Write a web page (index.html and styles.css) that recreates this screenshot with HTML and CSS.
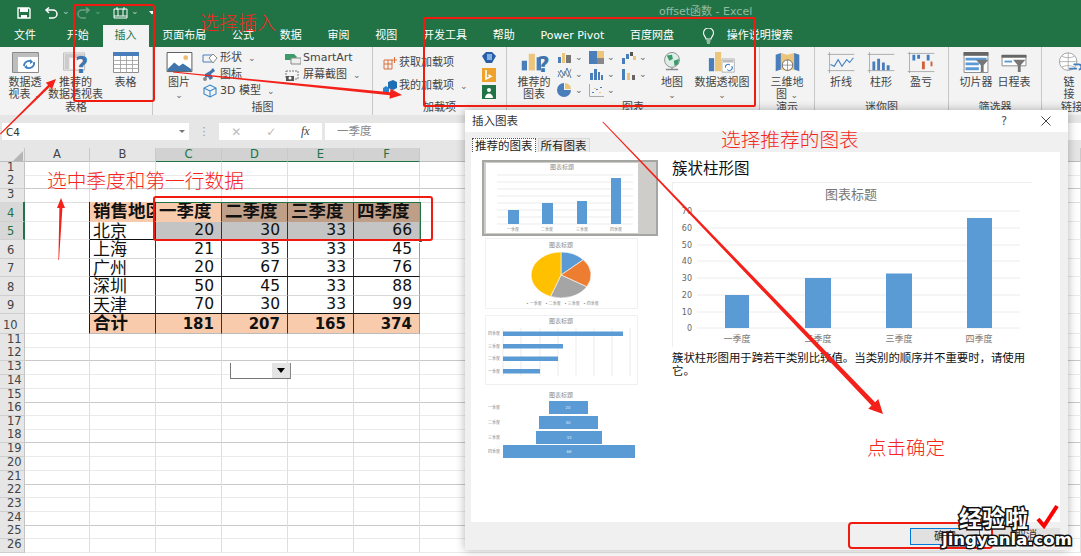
FILE: index.html
```html
<!DOCTYPE html>
<html lang="zh">
<head>
<meta charset="utf-8">
<title>offset函数 - Excel</title>
<link rel="stylesheet" href="styles.css">
</head>
<body>
<header class="titlebar">
  <div class="qa">
    <svg class="qa-save" width="14" height="12" viewBox="0 0 14 12"><path d="M1 1h11l1 1v9H1z" fill="none" stroke="#fff" stroke-width="1.4"/><path d="M3 1h8v4H3zM4 8h6v3H4z" fill="#fff"/></svg>
    <svg class="qa-undo" width="15" height="12" viewBox="0 0 15 12"><path d="M2 3h7a4 4 0 0 1 0 8H5M5 .5 2 3l3 3" fill="none" stroke="#fff" stroke-width="1.5"/></svg>
    <span class="qa-caret">⌄</span>
    <svg class="qa-redo" width="15" height="12" viewBox="0 0 15 12"><path d="M13 3H6a4 4 0 0 0 0 8h4M10 .5 13 3l-3 3" fill="none" stroke="#6f9f85" stroke-width="1.5"/></svg>
    <span class="qa-caret qa-c2">⌄</span>
    <svg class="qa-print" width="15" height="12" viewBox="0 0 15 12"><path d="M1 2h13v9H1zM1 9h13M5 2v7M10 2v7M4 0v3M11 0v3" fill="none" stroke="#fff" stroke-width="1"/></svg>
    <span class="qa-caret qa-c3">⌄</span>
    <svg class="qa-more" width="6" height="4" viewBox="0 0 6 4"><path d="M0 0h6L3 3.5z" fill="#fff"/></svg>
  </div>
  <div class="doc-title">offset函数 - Excel</div>
</header>
<nav class="tabs">
  <span class="tab tab-file">文件</span><span class="tab">开始</span><span class="tab tab-on">插入</span><span class="tab">页面布局</span><span class="tab">公式</span><span class="tab">数据</span><span class="tab">审阅</span><span class="tab">视图</span><span class="tab">开发工具</span><span class="tab">帮助</span><span class="tab">Power Pivot</span><span class="tab">百度网盘</span>
  <span class="tab tab-tell"><svg width="13" height="16" viewBox="0 0 13 16"><path d="M4 11c0-2-2.500-3-2.500-6a5 5 0 0 1 10 0c0 3-2.500 4-2.500 6zM4.500 13h4M5 15h3" fill="none" stroke="#fff" stroke-width="1.100"/></svg><span>操作说明搜索</span></span>
</nav>
<section class="ribbon">
  <div class="group g-table">
    <div class="gbody">
      <div class="rb w50"><svg width="27" height="21" viewBox="0 0 27 21"><path d="M.5.500h26v20H.5z" fill="#fff" stroke="#8a8a8a"/><path d="M1 1h25v4H1zM1 5h5v15H1z" fill="#bdbdbd"/><path d="M12 14a5 5 0 0 1 8-4M22 10a5 5 0 0 1-8 5" fill="none" stroke="#3f7fc1" stroke-width="1.800"/><path d="M18 7l3 3-3 2zM15 17l-3-2 3-2z" fill="#3f7fc1"/></svg><span class="rl">数据透<br>视表 <i class="car">⌄</i></span></div>
      <div class="rb w51"><svg width="27" height="22" viewBox="0 0 27 22"><path d="M1 1h22v18H1z" fill="#f6f6f6" stroke="#bbb"/><path d="M2 2h20v4H2zM2 6h5v12H2z" fill="#ccc"/><text x="13" y="22" class="ic-q">?</text></svg><span class="rl">推荐的<br>数据透视表</span></div>
      <div class="rb w49"><svg width="26" height="21" viewBox="0 0 26 21"><path d="M.5.500h25v20H.5z" fill="#fff" stroke="#8f8f8f"/><path d="M0 0h26v4H0z" fill="#4a7ebb"/><path d="M0 8.500h26M0 12.500h26M0 16.500h26M7.500 4v17M13.500 4v17M19.500 4v17" stroke="#9a9a9a" stroke-width=".8"/></svg><span class="rl">表格</span></div>
    </div>
    <div class="glabel">表格</div>
  </div>
  <div class="group g-illus">
    <div class="gbody pl3">
      <div class="rb w46"><svg width="27" height="22" viewBox="0 0 27 22"><path d="M.5.500h26v20H.5z" fill="#fff" stroke="#555"/><path d="M1 18l7-7 5 4 4-3 9 6v2H1z" fill="#3f74ad"/><circle cx="20" cy="6" r="2.500" fill="#eebc6d"/></svg><span class="rl">图片<br><i class="car">⌄</i></span></div>
      <div class="smcol w83">
        <div class="smrow"><svg width="16" height="13" viewBox="0 0 16 13"><path d="M1 3h9v7H1z" fill="none" stroke="#4a7ebb"/><path d="M11 2l4 4-4 5-4-5z" fill="#fff" stroke="#8a8a8a"/></svg>形状 <i class="car">⌄</i></div>
        <div class="smrow"><svg width="16" height="13" viewBox="0 0 16 13"><path d="M3 6l5-3 3-3 2 3-4 3 2 4-3 2-2-3-3 1z" fill="#3f74ad"/><circle cx="3" cy="11" r="2" fill="#888"/></svg>图标</div>
        <div class="smrow"><svg width="16" height="14" viewBox="0 0 16 14"><path d="M8 1l6 3v6l-6 3-6-3V4zM2 4l6 3 6-3M8 7v6" fill="none" stroke="#3a87c8" stroke-width="1.100"/></svg>3D 模型 <i class="car">⌄</i></div>
      </div>
      <div class="smcol">
        <div class="smrow"><svg width="16" height="13" viewBox="0 0 16 13"><path d="M0 2h9l3 3-3 3H0z" fill="#3d9a6b"/><path d="M6 6h10v6H6z" fill="#eee" stroke="#888"/></svg>SmartArt</div>
        <div class="smrow"><svg width="16" height="13" viewBox="0 0 16 13"><path d="M1 3h12v8H1z" fill="none" stroke="#777" stroke-dasharray="2 1"/><path d="M1 8h8v5H1z" fill="#555"/><circle cx="5" cy="10" r="1.500" fill="#fff"/></svg>屏幕截图 <i class="car">⌄</i></div>
      </div>
    </div>
    <div class="glabel">插图</div>
  </div>
  <div class="group g-addin">
    <div class="gbody pl10">
      <div class="smcol w99 addcol">
        <div class="smrow"><svg width="14" height="13" viewBox="0 0 14 13"><path d="M1 3h8v9H1zM5 3v9M1 7h8M11.500 0v6M8.500 3h6" fill="none" stroke="#d86f3a"/></svg>获取加载项</div>
        <div class="smrow"><svg width="14" height="13" viewBox="0 0 14 13"><path d="M5 2l5-2 4 2v6l-4 2-5-2z" fill="#1f6db3"/><path d="M0 8l3-2 3 2v4H0z" fill="#2a85d0"/></svg>我的加载项 <i class="car cargap">⌄</i></div>
      </div>
      <div class="addicons">
        <svg width="14" height="13" viewBox="0 0 14 13"><path d="M4 1h6l4 4-4 7H4L0 5z" fill="#2a5fa8"/><path d="M5 3h5v6H5z" fill="#7fb0e6"/></svg>
        <svg width="14" height="14" viewBox="0 0 14 14"><path d="M0 0h14v14H0z" fill="#f0a32c"/><path d="M4 2v9l5-2.500L6.500 7" fill="none" stroke="#fff" stroke-width="1.600"/></svg>
        <svg width="14" height="14" viewBox="0 0 14 14"><path d="M0 0h14v14H0z" fill="#217346"/><circle cx="7" cy="5" r="2" fill="#fff"/><path d="M3 13c0-6 8-6 8 0z" fill="#fff"/></svg>
      </div>
    </div>
    <div class="glabel">加载项</div>
  </div>
  <div class="group g-chart">
    <div class="gbody pl9">
      <div class="rb w36"><svg width="30" height="24" viewBox="0 0 30 24"><path d="M1 10h6v11H1z" fill="#4a7ebb"/><path d="M9 2h7v19H9z" fill="#ecc57a"/><path d="M18 6h5v15h-5z" fill="#4a7ebb"/><text x="19" y="23" class="ic-q">?</text></svg><span class="rl">推荐的<br>图表</span></div>
      <div class="chgrid">
        <span class="chi"><svg width="15" height="13" viewBox="0 0 15 13"><path d="M1 6h3v6H1z" fill="#4a7ebb"/><path d="M5 2h3v10H5z" fill="#ecc57a"/><path d="M9 4h5v8H9z" fill="#777"/></svg><i class="car">⌄</i></span>
        <span class="chi"><svg width="15" height="13" viewBox="0 0 15 13"><path d="M0 0h8v13H0z" fill="#4a7ebb"/><path d="M8 0h7v7H8z" fill="#ecc57a"/><path d="M8 7h7v6H8z" fill="#888"/></svg><i class="car">⌄</i></span>
        <span class="chi"><svg width="15" height="13" viewBox="0 0 15 13"><path d="M1 7h3v6H1zM5 3h3v5H5z" fill="#4a7ebb"/><path d="M9 1h3v4H9z" fill="#555"/><path d="M12 5h3v4h-3z" fill="#ecc57a"/></svg><i class="car">⌄</i></span>
        <span class="chi"><svg width="15" height="13" viewBox="0 0 15 13"><path d="M1 10l3-7 3 6 3-8 4 10" fill="none" stroke="#4a7ebb"/><path d="M1 4l4 7 3-7 3 6 3-8" fill="none" stroke="#888"/></svg><i class="car">⌄</i></span>
        <span class="chi"><svg width="15" height="13" viewBox="0 0 15 13"><path d="M1 6h3v7H1zM5 2h3v11H5zM9 5h2v8H9zM12 8h2v5h-2z" fill="#4a7ebb"/></svg><i class="car">⌄</i></span>
        <span class="chi"><svg width="15" height="13" viewBox="0 0 15 13"><path d="M1 2h3v11H1z" fill="#4a7ebb"/><path d="M6 6h3v7H6z" fill="#ecc57a"/><path d="M11 8h3v5h-3z" fill="#666"/></svg><i class="car">⌄</i></span>
        <span class="chi"><svg width="15" height="14" viewBox="0 0 15 14"><path d="M7 0a7 7 0 1 0 7 7H7z" fill="#4a7ebb"/><path d="M8 0a6 6 0 0 1 6 6H8z" fill="#ecc57a"/></svg><i class="car">⌄</i></span>
        <span class="chi"><svg width="15" height="13" viewBox="0 0 15 13"><path d="M.5 0v12.500H15" fill="none" stroke="#aaa"/><path d="M3 8h2v1H3zM7 5h2v1H7zM11 3h2v1h-2z" fill="#4a7ebb"/><path d="M5 4h2v1H5zM10 8h2v1h-2z" fill="#ecc57a"/></svg><i class="car">⌄</i></span>
      </div>
      <div class="rb w48"><svg width="24" height="24" viewBox="0 0 24 24"><circle cx="12" cy="9" r="8.500" fill="#dceee6" stroke="#888"/><path d="M6 4l6-1 1 5-4 2zM14 10l6-2-1 6-4 2z" fill="#3d9a6b"/><path d="M5 20h14M12 18v2" stroke="#888" stroke-width="1.500"/></svg><span class="rl">地图<br><i class="car">⌄</i></span></div>
      <div class="rb w52"><svg width="30" height="24" viewBox="0 0 30 24"><path d="M0 7h6v15H0z" fill="#4a7ebb"/><path d="M7 0h7v22H7z" fill="#ecc57a"/><path d="M15 8h14v15H15z" fill="#fff" stroke="#aaa"/><path d="M16 9h12v3H16z" fill="#bbb"/><path d="M19 18a3 3 0 0 1 5-3M26 16a3 3 0 0 1-5 4" fill="none" stroke="#3f7fc1" stroke-width="1.200"/></svg><span class="rl">数据透视图<br><i class="car">⌄</i></span></div>
    </div>
    <div class="glabel">图表</div>
  </div>
  <div class="group g-demo">
    <div class="gbody center">
      <div class="rb w52"><svg width="27" height="24" viewBox="0 0 27 24"><path d="M0 3l6-2v19l-6 2zM21 1l6 2v19l-6-2z" fill="#4a7ebb"/><path d="M6 1l7 2 8-2v19l-8 2-7-2z" fill="#ecc57a"/><circle cx="13.500" cy="15" r="6" fill="#fff" stroke="#666"/><path d="M7.500 15h12M13.500 9v12" stroke="#666" stroke-width=".7"/></svg><span class="rl">三维地<br>图 <i class="car">⌄</i></span></div>
    </div>
    <div class="glabel">演示</div>
  </div>
  <div class="group g-spark">
    <div class="gbody pl6">
      <div class="rb w40"><svg width="28" height="22" viewBox="0 0 28 22"><path d="M0 2.500h28M0 19.500h28M2 0v22" stroke="#9a9a9a" stroke-width=".8"/><path d="M3 13l4 2 4-7 4 7 5-7 3 3 4-5" fill="none" stroke="#3f7fc1" stroke-width="1.100"/></svg><span class="rl">折线</span></div>
      <div class="rb w40"><svg width="28" height="22" viewBox="0 0 28 22"><path d="M0 2.500h28M0 19.500h28M2 0v22" stroke="#9a9a9a" stroke-width=".8"/><path d="M5 10h3v9H5zM10 7h3v12h-3zM15 11h3v8h-3zM20 14h3v5h-3z" fill="#4a7ebb"/></svg><span class="rl">柱形</span></div>
      <div class="rb w40"><svg width="28" height="22" viewBox="0 0 28 22"><path d="M0 1.500h28M0 20.500h28M2 0v22" stroke="#9a9a9a" stroke-width=".8"/><path d="M5 3h3v6H5zM10 3h3v4h-3zM20 3h3v6h-3z" fill="#3f7fc1"/><path d="M15 10h3v8h-3zM24 10h2v5h-2z" fill="#d0603a"/></svg><span class="rl">盈亏</span></div>
    </div>
    <div class="glabel">迷你图</div>
  </div>
  <div class="group g-filter">
    <div class="gbody pl8">
      <div class="rb w38"><svg width="26" height="22" viewBox="0 0 26 22"><path d="M.5.500h25v21H.5z" fill="#fff" stroke="#888"/><path d="M0 0h26v4H0z" fill="#666"/><path d="M2 6h22v3H2zM2 11h14v3H2zM2 16h14v3H2z" fill="#5b9bd5"/><path d="M13 8h13l-5 6v7h-3v-7z" fill="#777"/></svg><span class="rl">切片器</span></div>
      <div class="rb w38"><svg width="26" height="22" viewBox="0 0 26 22"><path d="M.5 3.500h25v11H.5z" fill="#fff" stroke="#888"/><path d="M0 3h26v3H0z" fill="#666"/><path d="M3 9h8v2H3z" fill="#5b9bd5"/><path d="M12 8h13l-5 6v7h-3v-7z" fill="#777"/></svg><span class="rl">日程表</span></div>
    </div>
    <div class="glabel">筛选器</div>
  </div>
  <div class="group g-link">
    <div class="gbody pl8">
      <div class="rb w38"><svg width="27" height="24" viewBox="0 0 27 24"><circle cx="12" cy="11" r="10" fill="#fff" stroke="#999"/><path d="M2 11h20M12 1v20M5 5c4 2 10 2 14 0M5 17c4-2 10-2 14 0" fill="none" stroke="#999" stroke-width=".8"/><path d="M13 19h9M18 14h6a3 3 0 0 1 0 6" fill="none" stroke="#3f7fc1" stroke-width="2"/></svg><span class="rl">链<br>接</span></div>
    </div>
    <div class="glabel">链接</div>
  </div>
</section>
<section class="fbar">
  <div class="namebox"><span>C4</span><i class="nb-car"></i></div>
  <div class="fdots">⋮</div>
  <div class="fbtns"><span class="fb">✕</span><span class="fb">✓</span><span class="fb fx">fx</span></div>
  <div class="finput">一季度</div>
</section>
<main class="sheet">
  <div class="row colhead"><span class="corner"></span><span class="ch">A</span><span class="ch">B</span><span class="ch on">C</span><span class="ch on">D</span><span class="ch on">E</span><span class="ch on">F</span><span class="ch">G</span></div>
  <div class="row h13"><span class="rh">1</span><i></i><i></i><i></i><i></i><i></i><i></i><i></i></div>
  <div class="row h14 d"><span class="rh">2</span><i></i><i></i><i></i><i></i><i></i><i></i><i></i></div>
  <div class="row h13 lastb"><span class="rh">3</span><i></i><i></i><i></i><i></i><i></i><i></i><i></i></div>
  <div class="row h20"><span class="rh on">4</span><i class="bl"></i><b class="c peach">销售地区</b><b class="c peach">一季度</b><b class="c tan">二季度</b><b class="c tan">三季度</b><b class="c tan fr">四季度</b><i></i></div>
  <div class="row h18"><span class="rh on">5</span><i class="bl"></i><span class="c lb">北京</span><span class="c n sel lb">20</span><span class="c n sel lb">30</span><span class="c n sel lb">33</span><span class="c n sel lb fr">66</span><i></i></div>
  <div class="row h19"><span class="rh">6</span><i class="bl"></i><span class="c">上海</span><span class="c n">21</span><span class="c n">35</span><span class="c n">33</span><span class="c n fr">45</span><i></i></div>
  <div class="row h18"><span class="rh">7</span><i class="bl"></i><span class="c lb">广州</span><span class="c n lb">20</span><span class="c n lb">67</span><span class="c n lb">33</span><span class="c n lb fr">76</span><i></i></div>
  <div class="row h19"><span class="rh">8</span><i class="bl"></i><span class="c">深圳</span><span class="c n">50</span><span class="c n">45</span><span class="c n">33</span><span class="c n fr">88</span><i></i></div>
  <div class="row h18"><span class="rh">9</span><i class="bl"></i><span class="c lb">天津</span><span class="c n lb">70</span><span class="c n lb">30</span><span class="c n lb">33</span><span class="c n lb fr">99</span><i></i></div>
  <div class="row h20"><span class="rh r10">10</span><i class="bl"></i><b class="c peach tot">合计</b><b class="c n peach tot">181</b><b class="c n peach tot">207</b><b class="c n peach tot">165</b><b class="c n peach tot fr">374</b><i></i></div>
  <div class="row h13"><span class="rh">11</span><i></i><i></i><i></i><i></i><i></i><i></i><i></i></div>
  <div class="row h14 d"><span class="rh">12</span><i></i><i></i><i></i><i></i><i></i><i></i><i></i></div>
  <div class="row h14"><span class="rh">13</span><i></i><i></i><i></i><i></i><i></i><i></i><i></i></div>
  <div class="row h14"><span class="rh">14</span><i></i><i></i><i></i><i></i><i></i><i></i><i></i></div>
  <div class="row h13 d"><span class="rh">15</span><i></i><i></i><i></i><i></i><i></i><i></i><i></i></div>
  <div class="row h14"><span class="rh">16</span><i></i><i></i><i></i><i></i><i></i><i></i><i></i></div>
  <div class="row h13"><span class="rh">17</span><i></i><i></i><i></i><i></i><i></i><i></i><i></i></div>
  <div class="row h14 d"><span class="rh">18</span><i></i><i></i><i></i><i></i><i></i><i></i><i></i></div>
  <div class="row h14"><span class="rh">19</span><i></i><i></i><i></i><i></i><i></i><i></i><i></i></div>
  <div class="row h14"><span class="rh">20</span><i></i><i></i><i></i><i></i><i></i><i></i><i></i></div>
  <div class="row h13 d"><span class="rh">21</span><i></i><i></i><i></i><i></i><i></i><i></i><i></i></div>
  <div class="row h14"><span class="rh">22</span><i></i><i></i><i></i><i></i><i></i><i></i><i></i></div>
  <div class="row h14"><span class="rh">23</span><i></i><i></i><i></i><i></i><i></i><i></i><i></i></div>
  <div class="row h13 d"><span class="rh">24</span><i></i><i></i><i></i><i></i><i></i><i></i><i></i></div>
  <div class="row h14"><span class="rh">25</span><i></i><i></i><i></i><i></i><i></i><i></i><i></i></div>
  <div class="row h13"><span class="rh">26</span><i></i><i></i><i></i><i></i><i></i><i></i><i></i></div>
  <div class="selbox"><i class="handle"></i></div>
  <div class="combo"><i class="combo-btn"></i></div>
</main>

<aside class="dialog">
  <div class="dtitle"><span>插入图表</span><span class="dq">?</span><svg class="dx" width="10" height="10" viewBox="0 0 10 10"><path d="M.5.500l9 9M9.500.500l-9 9" stroke="#444"/></svg></div>
  <div class="dtabs"><span class="dtab dtab-on">推荐的图表</span><span class="dtab">所有图表</span></div>
  <div class="dpanel">
    <div class="thumbs">
      <div class="thumb sel-thumb">
        <svg width="152" height="70" viewBox="0 0 152 70">
          <rect width="152" height="70" fill="#fff"/>
          <text x="76" y="6" class="t-title">图表标题</text>
          <path d="M11 12h136M11 19h136M11 26h136M11 33h136M11 40h136M11 47h136M11 54h136M11 61h136" stroke="#e6e6e6" stroke-width=".8"/>
          <path d="M22 47h11v14H22zM56 40h11v21H56zM91 38h10v23H91zM125 15h10v46h-10z" fill="#5b9bd5"/>
          <text x="27" y="68" class="t-tiny">一季度</text><text x="61" y="68" class="t-tiny">二季度</text><text x="96" y="68" class="t-tiny">三季度</text><text x="130" y="68" class="t-tiny">四季度</text>
        </svg>
      </div>
      <div class="thumb t2">
        <svg width="153" height="71" viewBox="0 0 153 71">
          <rect x=".5" y=".5" width="152" height="70" fill="#fff" stroke="#f0f0f0"/>
          <text x="76" y="9" class="t-title">图表标题</text>
          <g stroke="#fff" stroke-width=".6">
            <path d="M76 37V14A30 23 0 0 1 98.400 21.700Z" fill="#5b9bd5"/>
            <path d="M76 37 98.400 21.700A30 23 0 0 1 101.800 48.800Z" fill="#ed7d31"/>
            <path d="M76 37 101.800 48.800A30 23 0 0 1 65.500 58.500Z" fill="#a5a5a5"/>
            <path d="M76 37 65.500 58.500A30 23 0 0 1 76 14Z" fill="#ffc000"/>
          </g>
          <text x="49" y="67" class="t-tiny">• 一季度</text><text x="68" y="67" class="t-tiny">• 二季度</text><text x="87" y="67" class="t-tiny">• 三季度</text><text x="106" y="67" class="t-tiny">• 四季度</text>
        </svg>
      </div>
      <div class="thumb t3">
        <svg width="153" height="70" viewBox="0 0 153 70">
          <rect x=".5" y=".5" width="152" height="69" fill="#fff" stroke="#f0f0f0"/>
          <text x="76" y="8" class="t-title">图表标题</text>
          <path d="M18 13v48M36 13v48M55 13v48M73 13v48M91 13v48M109 13v48M127 13v48M145 13v48" stroke="#e6e6e6" stroke-width=".8"/>
          <path d="M18 16.500h120v4.500H18zM18 29h60v4.500H18zM18 41.500h55v4.500H18zM18 54h37v4.500H18z" fill="#5b9bd5"/>
          <text x="9" y="20" class="t-tiny">四季度</text><text x="9" y="33" class="t-tiny">三季度</text><text x="9" y="45" class="t-tiny">二季度</text><text x="9" y="58" class="t-tiny">一季度</text>
        </svg>
      </div>
      <div class="thumb t4">
        <svg width="153" height="68" viewBox="0 0 153 68">
          <text x="76" y="5" class="t-title">图表标题</text>
          <path d="M64 9h39v13H64zM54 24h59v13H54zM51 39h66v13H51zM18 53h132v13H18z" fill="#5b9bd5"/>
          <text x="9" y="17" class="t-tiny">一季度</text><text x="9" y="32" class="t-tiny">二季度</text><text x="9" y="47" class="t-tiny">三季度</text><text x="9" y="61" class="t-tiny">四季度</text>
          <text x="83" y="17" class="t-tiny t-w">20</text><text x="83" y="32" class="t-tiny t-w">30</text><text x="84" y="47" class="t-tiny t-w">33</text><text x="84" y="61" class="t-tiny t-w">66</text>
        </svg>
      </div>
    </div>
    <div class="detail">
      <h2 class="dhead">簇状柱形图</h2>
      <svg class="bigchart" width="360" height="165" viewBox="0 0 360 165">
        <path d="M.5 165V.5H360" fill="none" stroke="#eee"/>
        <text x="179" y="17" class="c-title">图表标题</text>
        <path d="M25 29h323M25 46h323M25 63h323M25 79h323M25 96h323M25 113h323M25 130h323M25 146h323" stroke="#ececec"/>
        <path d="M53 113h24v33H53zM133 96h26v50h-26zM214 91.500h26V146h-26zM295 36h25v110h-25z" fill="#5b9bd5"/>
        <g class="c-y"><text x="20" y="32">70</text><text x="20" y="49">60</text><text x="20" y="66">50</text><text x="20" y="82">40</text><text x="20" y="99">30</text><text x="20" y="116">20</text><text x="20" y="133">10</text><text x="20" y="149">0</text></g>
        <g class="c-x"><text x="65" y="160">一季度</text><text x="146" y="160">二季度</text><text x="227" y="160">三季度</text><text x="307" y="160">四季度</text></g>
      </svg>
      <p class="ddesc">簇状柱形图用于跨若干类别比较值。当类别的顺序并不重要时，请使用它。</p>
    </div>
  </div>
  <div class="dfoot"><span class="dbtn dbtn-on">确定</span><span class="dbtn">取消</span></div>
</aside>

<div class="note n1">选择插入</div>
<div class="note n2">选中季度和第一行数据</div>
<div class="note n3">选择推荐的图表</div>
<div class="note n4">点击确定</div>

<svg class="marks" width="1081" height="556" viewBox="0 0 1081 556">
  <g fill="none" stroke="#ef1a10" stroke-width="2">
    <rect x="74" y="5" width="80" height="96" rx="2"/>
    <rect x="424" y="18" width="331" height="88" rx="1"/>
    <rect x="154" y="197" width="278" height="43" rx="2"/>
    <rect x="849" y="523" width="143" height="25" rx="3"/>
  </g>
  <g fill="#f4201a">
    <polygon points="0,133.400 48.100,85.100 45.700,82.800 56,79 52,89.200 49.700,86.900 .6,134.400"/>
    <polygon points="173,71.600 390.150,92.300 390.500,88.800 402,95 389.500,98.800 389.850,95.300 173,72.600"/>
    <polygon points="58.400,260 59.400,208 57,208 61,198 65,208 62.400,208 59,260"/>
    <polygon points="603,121.500 875.100,402.200 878.350,399.100 883,414 868.250,408.700 871.500,405.600 602.500,122.300"/>
  </g>
  <path d="M1038 519l6 7 13-20" fill="none" stroke="#f00" stroke-width="4"/>
</svg>
<div class="wm wm-cn">经验啦</div>
<div class="wm wm-en">jingyanla.com</div>
</body>
</html>
```
FILE: styles.css
```css
* { box-sizing: border-box; }
html, body { margin: 0; padding: 0; }
body {
  position: relative;
  width: 1081px;
  height: 556px;
  overflow: hidden;
  background: #fff;
  font: 11px/12px "DejaVu Sans", "Noto Sans CJK SC", sans-serif;
  color: #333;
}
i { font-style: normal; }

/* title bar */
.titlebar { height: 25px; background: #217346; display: flex; align-items: center; position: relative; }
.qa { display: flex; align-items: center; padding-left: 17px; }
.qa-undo { margin-left: 13px; }
.qa-caret { color: #b5d0c1; font-size: 9px; line-height: 8px; margin-left: 3px; width: 10px; margin-top: -3px; }
.qa-c2 { color: #6f9f85; }
.qa-redo { margin-left: 4px; }
.qa-print { margin-left: 9px; }
.qa-more { margin-left: 8px; }
.doc-title { position: absolute; left: 659px; top: 6px; color: #93bba5; font-size: 11px; white-space: nowrap; }

.tabs { height: 22px; background: #217346; display: flex; align-items: center; gap: 1.75px; padding-left: 2px; color: #fff; }
.tab { height: 22px; padding: 0 12px; line-height: 22px; white-space: nowrap; }
.tab-file { margin-right: 5px; }
.tab-on { background: #f3f3f3; color: #217346; }
.tab-tell { display: flex; align-items: center; gap: 12px; margin-left: 2px; }

/* ribbon */
.ribbon { height: 68px; background: #f3f3f3; display: flex; font-size: 11px; }
.group { display: flex; flex-direction: column; border-right: 1px solid #c8c8c8; flex: none; position: relative; }
.g-table { width: 153px; }
.g-illus { width: 220px; }
.g-addin { width: 134px; }
.g-chart { width: 253px; }
.g-demo { width: 55px; }
.g-spark { width: 134px; }
.g-filter { width: 93px; }
.g-link { flex: 1; border-right: 0; }
.g-link .glabel { padding-left: 14px; }
.gbody { flex: 1; display: flex; min-height: 0; }
.center { justify-content: center; }
.pl3 { padding-left: 3px; }
.pl6 { padding-left: 6px; }
.pl8 { padding-left: 8px; }
.pl9 { padding-left: 9px; }
.pl10 { padding-left: 10px; }
.glabel { height: 13px; line-height: 13px; text-align: center; color: #444; flex: none; margin-bottom: 1px; }
.rb { display: flex; flex-direction: column; align-items: center; padding-top: 5px; flex: none; }
.rb svg { height: 21px; flex: none; }
.rl { margin-top: 4px; text-align: center; white-space: nowrap; color: #444; }
.w36 { width: 36px; } .w38 { width: 38px; } .w40 { width: 40px; } .w46 { width: 46px; }
.w48 { width: 48px; } .w49 { width: 49px; } .w50 { width: 50px; } .w51 { width: 51px; } .w52 { width: 52px; }
.w83 { width: 83px; } .w99 { width: 99px; }
.car { color: #666; font-size: 9px; line-height: 8px; }
.cargap { margin-left: 6px; }
.smcol { display: flex; flex-direction: column; flex: none; padding-top: 3px; }
.smrow { height: 16.5px; display: flex; align-items: center; gap: 2px; white-space: nowrap; color: #444; }
.smrow svg { flex: none; }
.smrow .car { margin-left: 4px; }
.addcol { padding-top: 8px; gap: 6.5px; }
.addicons { display: flex; flex-direction: column; gap: 3.5px; padding-top: 4px; }
.chgrid { width: 96px; display: grid; grid-template-columns: repeat(3, 32px); grid-auto-rows: 16.5px; padding: 2px 0 0 5px; flex: none; }
.chi { display: flex; align-items: center; gap: 3px; }

/* formula bar */
.fbar { height: 33px; background: #e6e6e6; display: flex; align-items: flex-start; padding: 8px 0 0 2px; }
.namebox { width: 187px; height: 17px; background: #fff; display: flex; align-items: center; justify-content: space-between; padding: 0 4px; font-size: 10.5px; }
.nb-car { border: 3px solid transparent; border-top-color: #777; border-bottom: 0; }
.fdots { width: 30px; text-align: center; color: #999; line-height: 17px; }
.fbtns { width: 103px; height: 17px; background: #fff; display: flex; align-items: center; justify-content: space-around; color: #bbb; font-size: 12px; }
.fx { color: #444; font: italic 12px "Liberation Serif", serif; }
.finput { margin-left: 3px; flex: 1; height: 17px; background: #fff; padding-left: 12px; line-height: 17px; color: #888; font-size: 11.5px; }

/* sheet */
.sheet { position: relative; height: 408px; overflow: hidden; }
.row { display: grid; grid-template-columns: 25px 65px 66px 66px 66px 66px 66px 1fr; }
.row > i { border-right: 1px solid #dedede; border-bottom: 1px solid #eaeaea; display: block; }
.row.d > i { border-bottom-color: #c9c9c9; }
.row.lastb > i { border-bottom-color: #dedede; }
.row .bl { border-right-color: #222; }
.colhead { height: 14px; background: #e6e6e6; border-bottom: 1px solid #bdbdbd; }
.corner { border-right: 1px solid #c4c4c4; position: relative; }
.corner::after { content: ""; position: absolute; right: 1px; bottom: 1px; border: 5px solid transparent; border-right-color: #b5b5b5; border-bottom-color: #b5b5b5; }
.ch { text-align: center; font-size: 11.5px; line-height: 13px; color: #444; border-right: 1px solid #c9c9c9; }
.ch.on { background: #d2d2d2; color: #217346; border-bottom: 1px solid #217346; height: 14px; }
.rh { background: #e6e6e6; border-right: 1px solid #c4c4c4; border-bottom: 1px solid #cfcfcf; font: 11.5px/1 "DejaVu Sans", sans-serif; color: #444; display: flex; align-items: flex-end; padding: 0 0 1.5px 7px; }
.rh.on { background: #d8d8d8; color: #217346; border-right: 2px solid #217346; }
.r10 { padding-left: 3px; }
.h13 { height: 13px; } .h14 { height: 14px; } .h18 { height: 18px; } .h19 { height: 19px; } .h20 { height: 20px; }
.c { display: flex; align-items: center; overflow: hidden; white-space: nowrap; padding: 1px 0 0 3px; font-size: 17px; line-height: 1; color: #111; border-right: 1px solid #333; border-bottom: 1px solid #d8d8d8; font-family: "DejaVu Sans", "Noto Sans CJK SC", sans-serif; }
b.c { font-size: 17.500px; font-weight: 700; border-bottom-color: transparent; }
.n { justify-content: flex-end; padding: 1px 7px 0 0; font-size: 15.500px; }
b.tot { font-size: 15px; border-bottom-color: #bbb; }
.tot:not(.n) { font-size: 17.500px; }
.peach { background: #f8cbad; }
.tan { background: #bf9f87; }
.sel { background: #c4c4c4; }
.lb { border-bottom-color: #111; }
.fr { border-right-color: #999; }
.selbox { position: absolute; left: 156px; top: 54px; width: 265px; height: 39px; border-top: 1px solid #217346; border-right: 1px solid #217346; pointer-events: none; }
.handle { position: absolute; right: -3px; bottom: -2px; width: 5px; height: 4px; background: #217346; border: 1px solid #fff; }
.combo { position: absolute; left: 230px; top: 215px; width: 61px; height: 16px; background: #fff; border-left: 1px solid #777; border-bottom: 1px solid #777; border-right: 1px solid #888; display: flex; justify-content: flex-end; }
.combo-btn { width: 18px; height: 15px; background: #e4e4e4; position: relative; }
.combo-btn::after { content: ""; position: absolute; left: 5px; top: 5px; border: 4px solid transparent; border-top: 5px solid #000; border-bottom: 0; }

/* dialog */
.dialog { position: absolute; left: 465px; top: 110px; width: 603px; height: 440px; background: #f0f0f0; box-shadow: 0 0 9px rgba(0, 0, 0, .3); display: flex; flex-direction: column; }
.dtitle { height: 22px; background: #fff; flex: none; display: flex; align-items: center; padding: 0 17px 0 7px; font-size: 11.500px; position: relative; }
.dq { margin-left: auto; margin-right: 34px; color: #555; }
.dtabs { height: 20px; display: flex; align-items: flex-end; gap: 2px; padding-left: 7px; flex: none; font-size: 11.500px; color: #222; }
.dtab { height: 14px; padding: 0 2px; background: #eaeaea; line-height: 14px; white-space: nowrap; border: 1px solid #d8d8d8; border-bottom: 0; }
.dtab-on { background: #fff; border: 1px dotted #555; border-bottom: 0; }
.dpanel { height: 370px; margin: 0 8px 0 6px; background: #fff; display: flex; flex: none; overflow: hidden; }
.thumbs { width: 201px; flex: none; display: flex; flex-direction: column; align-items: flex-start; padding: 8px 0 0 11px; }
.thumb { flex: none; line-height: 0; }
.thumb svg { display: block; }
.sel-thumb { background: #cfcdc9; border: 2px solid #a5a5a1; padding: 1px 18px 1px 2px; }
.t2 { margin: 2px 0 0 3px; }
.t3 { margin: 6px 0 0 3px; }
.t4 { margin: 7px 0 0 3px; }
.t-title { font-size: 6px; fill: #888; text-anchor: middle; }
.t-tiny { font-size: 4px; fill: #8a8a8a; text-anchor: middle; }
.t-w { fill: #dbe8f5; }
.detail { width: 360px; flex: none; }
.dhead { margin: 8px 0 4px; font-size: 15.500px; line-height: 18px; font-weight: 400; color: #111; white-space: nowrap; }
.bigchart { display: block; }
.c-title { font-size: 13px; fill: #777; text-anchor: middle; }
.c-y text { font-size: 8px; fill: #666; text-anchor: end; }
.c-x text { font-size: 9px; fill: #777; text-anchor: middle; }
.ddesc { margin: 5px 0 0; font-size: 11.400px; line-height: 13px; color: #111; }
.dfoot { flex: 1; display: flex; justify-content: flex-end; align-items: center; gap: 12px; padding-right: 8px; }
.dbtn { width: 68px; height: 17px; background: #e1e1e1; text-align: center; line-height: 16px; font-size: 11px; color: #333; }
.dbtn-on { width: 70px; border: 1px solid #0078d7; }

/* annotations */
.note { position: absolute; color: #f4261d; font-size: 19px; line-height: 24px; white-space: nowrap; font-family: "Noto Sans CJK SC", sans-serif; font-weight: 300; }
.n1 { left: 200px; top: 10px; }
.n2 { left: 47px; top: 168px; font-size: 19.700px; }
.n3 { left: 721px; top: 127px; font-size: 19.700px; }
.n4 { left: 867px; top: 435px; font-size: 19.500px; }
.marks { position: absolute; left: 0; top: 0; pointer-events: none; }
.wm { position: absolute; color: #fff; font-weight: 700; white-space: nowrap; -webkit-text-stroke: 3px #111; paint-order: stroke fill; }
.wm-cn { left: 959px; top: 504px; font: 700 23px/27px "Noto Sans CJK SC", sans-serif; }
.wm-en { left: 942px; top: 530px; font: 700 16.500px/20px "DejaVu Sans", sans-serif; }

/* svg question mark */
.ic-q { font: 700 24px/1 "DejaVu Sans", sans-serif; fill: #3f74ad; }
```
